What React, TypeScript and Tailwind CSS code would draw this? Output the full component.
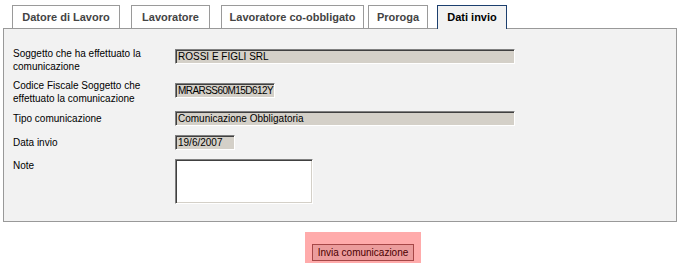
const tabs = [
  { label: 'Datore di Lavoro', w: 'w-[108px]', ml: 'ml-0' },
  { label: 'Lavoratore', w: 'w-[79px]', ml: 'ml-[11px]' },
  { label: 'Lavoratore co-obbligato', w: 'w-[143px]', ml: 'ml-[11px]' },
  { label: 'Proroga', w: 'w-[60px]', ml: 'ml-[4px]' },
  { label: 'Dati invio', w: 'w-[70px]', ml: 'ml-[9px]', active: true },
];

const inset =
  'border border-t-[#808080] border-l-[#808080] border-b-white border-r-white shadow-[inset_1px_1px_0_#404040]';

function Field({ value, w, tight = false }: { value: string; w: string; tight?: boolean }) {
  return (
    <div
      className={`${w} h-[15px] bg-[#d4d0c8] ${inset} pl-[2px] text-[10px] leading-[13px] text-black whitespace-nowrap overflow-hidden ${
        tight ? 'tracking-[-0.55px]' : ''
      }`}
    >
      {value}
    </div>
  );
}

export default function App() {
  return (
    <div
      className="w-[680px] h-[269px] bg-white overflow-hidden"
      style={{ fontFamily: '"Liberation Sans", Arial, sans-serif' }}
    >
      {/* Tabs */}
      <div className="relative z-10 flex items-start pt-[5px] pl-[12px] h-[29px]">
        {tabs.map((t) =>
          t.active ? (
            <div
              key={t.label}
              className={`${t.w} ${t.ml} h-[24px] bg-[#f2f2f2] border border-b-0 border-[#1c3f6e] flex items-center justify-center text-[11px] font-bold text-black`}
            >
              {t.label}
            </div>
          ) : (
            <div
              key={t.label}
              className={`${t.w} ${t.ml} h-[23px] bg-white border border-b-0 border-[#9a9a9a] flex items-center justify-center text-[11px] font-bold text-[#444]`}
            >
              {t.label}
            </div>
          )
        )}
      </div>

      {/* Panel */}
      <div className="-mt-px ml-[3px] w-[674px] h-[194px] bg-[#f2f2f2] border border-[#999] pl-[9px] pt-[18px] text-[10px] leading-[13px] text-black">
        <div className="flex">
          <div className="w-[162px]">
            Soggetto che ha effettuato la
            <br />
            comunicazione
          </div>
          <div className="mt-[2px]">
            <Field value="ROSSI E FIGLI SRL" w="w-[340px]" />
          </div>
        </div>

        <div className="flex mt-[6px]">
          <div className="w-[162px]">
            Codice Fiscale Soggetto che
            <br />
            effettuato la comunicazione
          </div>
          <div className="mt-[4px]">
            <Field value="MRARSS60M15D612Y" w="w-[100px]" tight />
          </div>
        </div>

        <div className="flex mt-[6px]">
          <div className="w-[162px] pt-[1px]">Tipo comunicazione</div>
          <Field value="Comunicazione Obbligatoria" w="w-[340px]" />
        </div>

        <div className="flex mt-[9px]">
          <div className="w-[162px] pt-[1px]">Data invio</div>
          <Field value="19/6/2007" w="w-[60px]" />
        </div>

        <div className="flex mt-[9px]">
          <div className="w-[162px]">Note</div>
          <div className="w-[138px] h-[45px] bg-white border border-t-[#808080] border-l-[#808080] border-b-white border-r-white shadow-[inset_1px_1px_0_#404040,inset_-1px_-1px_0_#d4d0c8]" />
        </div>
      </div>

      {/* Submit */}
      <div className="mt-[10px] ml-[305px] w-[116px] h-[31px] bg-[#ffabab] p-[7px]">
        <button className="w-[102px] h-[17px] bg-[#eb9c9c] border border-[#a64747] text-[10px] leading-[15px] text-[#4a0000] whitespace-nowrap">
          Invia comunicazione
        </button>
      </div>
    </div>
  );
}
